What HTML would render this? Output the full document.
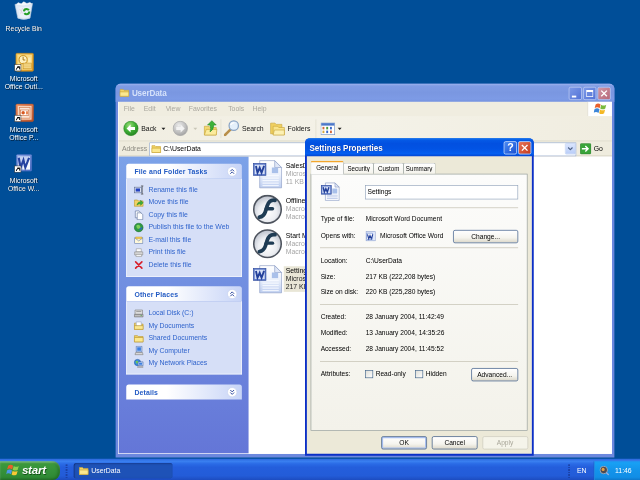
<!DOCTYPE html>
<html lang="en">
<head>
<meta charset="utf-8">
<title>UserData - Settings Properties</title>
<style>
html,body{margin:0;padding:0;}
body{width:640px;height:480px;overflow:hidden;background:#004e98;font-family:"Liberation Sans",sans-serif;}
#root{position:absolute;left:0;top:0;width:1024px;height:768px;transform:scale(0.625);transform-origin:0 0;background:#004e98;font-size:11px;color:#000;overflow:hidden;filter:blur(0.6px);}
.abs{position:absolute;}
#root div,#root span,#root svg,#root b{position:absolute;white-space:nowrap;}
/* desktop icons */
.dlabel{color:#fff;text-align:center;width:90px;line-height:13px;font-size:11px;text-shadow:1px 1px 1px rgba(0,0,0,.7);}
/* explorer */
#exp{z-index:0;left:185px;top:134px;width:798px;height:597.500px;background:#6c88de;border-radius:8px 8px 0 0;}
#exptitle{left:0;top:0;width:798px;height:29px;border-radius:8px 8px 0 0;background:linear-gradient(#9db3ee 0%,#7f9ce4 12%,#7a97e1 50%,#7d9be6 85%,#7491dd 100%);}
#exptitle .t{left:26px;top:8px;font-weight:bold;font-size:13px;color:#d6e2fa;letter-spacing:-0.2px;}
.cbtn{width:21px;height:21px;border-radius:3px;border:1px solid #c8d4f6;box-sizing:border-box;}
#expin{left:4px;top:29px;width:790px;height:563px;background:#fff;}
#menubar{left:0;top:0;width:790px;height:24px;background:#f0ede0;}
#menubar span{top:5px;color:#a9a79e;}
#toolbar{left:0;top:23px;width:790px;height:40px;background:linear-gradient(90deg,#f1eee2,#f4f2e8 50%,#f0ede0);}
#toolbar span{color:#111;top:13px;}
#addr{left:0;top:62px;width:790px;height:25px;background:#efecde;border-top:1px solid #d8d4c4;border-bottom:1px solid #c9c6b6;box-sizing:border-box;z-index:2;}
#leftpane{left:0;top:87px;width:209px;height:476px;background:linear-gradient(#7ca2e8,#6476d7);}
.bxh{width:185px;height:24px;border-radius:4px 4px 0 0;background:linear-gradient(90deg,#fff 0%,#fff 35%,#c7d4f7 100%);}
.bxh b{left:13px;top:7px;color:#235bc4;font-size:11px;letter-spacing:0.25px;}
.bxb{width:183px;background:#d6dff7;border:1px solid #fff;border-top:none;}
.lnk{color:#2f63cc;left:34.500px;font-size:11px;}
.bxb svg,.bxb span{margin-top:1px;}
.tile{color:#000;line-height:13.5px;}
.tile i{font-style:normal;color:#a6a6a6;position:static;}
/* dialog */
#dlg{left:488px;top:221px;width:366px;height:508px;border-radius:8px 8px 0 0;background:#0c2fc6;}
#dlgtitle{left:0;top:0;width:366px;height:29px;border-radius:8px 8px 0 0;background:linear-gradient(#1a86f6 0%,#055ae6 10%,#0250e0 30%,#0253e4 60%,#045ef0 85%,#0246d2 100%);}
#dlgtitle .t{left:7px;top:8px;font-weight:bold;font-size:13px;color:#fff;letter-spacing:-0.1px;text-shadow:1px 1px 0 #0a2a90;}
#dlgin{left:3px;top:29px;width:360px;height:476px;background:#ece9d8;font-size:10.600px;}
.tab{height:18px;top:10px;background:linear-gradient(#fff,#f4f3ec);border:1px solid #919b9c;border-bottom:none;border-radius:3px 3px 0 0;box-sizing:border-box;text-align:center;line-height:17px;font-size:11px;}
.tab span{display:inline-block;transform:scaleX(0.9);}
#tabpage{left:6px;top:28px;width:347px;height:411px;background:linear-gradient(#fcfcfb,#f3f2ea);border:1px solid #919b9c;box-sizing:border-box;}
.sep{height:1px;background:#bdbaaa;left:21px;width:317px;}
.lab{left:22px;}
.val{left:94px;}
.btn{height:21px;width:75px;box-sizing:border-box;border:1px solid #24467c;border-radius:3px;background:linear-gradient(#fff 0%,#f5f4ee 60%,#dcd8ca 100%);text-align:center;line-height:18px;}
.chk{width:13px;height:13px;box-sizing:border-box;border:1px solid #3a5f87;background:linear-gradient(135deg,#dcdcd6,#fff);}
/* taskbar */
#taskbar{left:0;top:734px;width:1024px;height:34px;background:linear-gradient(#2b66dc 0%,#3a80f0 12%,#2a6be6 24%,#245edc 40%,#235cd8 80%,#1d4cc0 100%);}
</style>
</head>
<body>
<div id="root">

<!-- DESKTOP ICONS -->
<div id="desk" style="left:0;top:0;width:1024px;height:734px;">
 <!-- Recycle Bin -->
 <svg style="left:22px;top:2px" width="32" height="32" viewBox="0 0 32 32">
  <path d="M2 5 L30 3.500 L26 27 Q16 31 6.500 27 Z" fill="#dfe9f6" stroke="#b9cade" stroke-width="1"/>
  <path d="M3 6 l4 -4 l5 2 l4 -3.500 l5 3 l5 -2 l3 3 q-13 5 -26 1.500z" fill="#f4f8fd" stroke="#c4d2e4" stroke-width=".6"/>
  <path d="M7 10 L25 9 L23 25 Q16 27.500 9.500 25Z" fill="#eef3fa" opacity=".8"/>
  <circle cx="20.500" cy="16.500" r="4.300" fill="none" stroke="#27a027" stroke-width="3.200" stroke-dasharray="10.500 3"/>
  <path d="M9 12 l6 8 M14 11 l-3 9" stroke="#d8b8c8" stroke-width="1" opacity=".7"/>
 </svg>
 <div class="dlabel" style="left:-7px;top:38.500px;">Recycle Bin</div>
 <!-- Outlook -->
 <svg style="left:22px;top:84px" width="36" height="34" viewBox="0 0 36 34">
  <defs><linearGradient id="ol" x1="0" y1="0" x2="1" y2="1"><stop offset="0" stop-color="#f6c858"/><stop offset="1" stop-color="#dc9420"/></linearGradient></defs>
  <rect x="3.500" y="1" width="28" height="29" rx="2" fill="url(#ol)" stroke="#c08418"/>
  <rect x="6" y="3.500" width="23" height="24" fill="#f8dc88"/>
  <circle cx="15" cy="11.500" r="6.500" fill="#fdf0c0" stroke="#c8901c" stroke-width="1.600"/>
  <path d="M15 7v5h3.500" stroke="#a87410" stroke-width="1.500" fill="none"/>
  <rect x="15" y="17" width="13" height="9" fill="#fbe6a0" stroke="#c8901c"/>
  <path d="M15 20h13M15 23h13" stroke="#d8a030" stroke-width="1"/>
  <rect x="23" y="8" width="4" height="8" fill="#fdf0c0" opacity=".8"/>
  <rect x="1.500" y="19.5" width="10" height="10" fill="#fff" stroke="#333" stroke-width=".8"/><path d="M4 27.5 q.5 -4.500 5 -4.500 M9.500 23.0 h-4 M9.500 23.0 v4" stroke="#000" stroke-width="1.600" fill="none"/>
 </svg>
 <div class="dlabel" style="left:-7px;top:119.500px;">Microsoft<br>Office Outl...</div>
 <!-- PowerPoint -->
 <svg style="left:22px;top:165px" width="36" height="34" viewBox="0 0 36 34">
  <defs><linearGradient id="pl" x1="0" y1="0" x2="1" y2="1"><stop offset="0" stop-color="#ee9468"/><stop offset="1" stop-color="#b85028"/></linearGradient></defs>
  <rect x="3.500" y="1.500" width="28" height="28" rx="2" fill="url(#pl)" stroke="#b05028"/>
  <rect x="6.500" y="4.500" width="22" height="22" fill="#f8d4bc"/>
  <rect x="9" y="7" width="17" height="17" fill="#fbe6d8" stroke="#d07848"/>
  <rect x="11" y="11" width="13" height="9" fill="#fff" stroke="#c86838"/>
  <circle cx="15" cy="15.500" r="2.800" fill="#d85820"/>
  <rect x="19.500" y="13" width="3.500" height="5" fill="#e88858"/>
  <rect x="1.500" y="19.5" width="10" height="10" fill="#fff" stroke="#333" stroke-width=".8"/><path d="M4 27.5 q.5 -4.500 5 -4.500 M9.500 23.0 h-4 M9.500 23.0 v4" stroke="#000" stroke-width="1.600" fill="none"/>
 </svg>
 <div class="dlabel" style="left:-7px;top:201px;">Microsoft<br>Office P...</div>
 <!-- Word -->
 <svg style="left:22px;top:246px" width="36" height="34" viewBox="0 0 36 34">
  <defs><linearGradient id="wl" x1="0" y1="0" x2="1" y2="1"><stop offset="0" stop-color="#98aee8"/><stop offset="1" stop-color="#4868c0"/></linearGradient></defs>
  <rect x="4.500" y="1.500" width="24" height="26" rx="1" fill="url(#wl)" stroke="#5878c8"/>
  <rect x="7" y="4" width="19" height="21" fill="#c4d2f2"/>
  <path d="M17 14 L26 9 V25 H14z" fill="#f4f7fd"/>
  <path d="M8 6.500 l3 15.500 l4.500 -12 l3 12 l6 -15.500" stroke="#2442a0" stroke-width="3.400" fill="none" stroke-linejoin="miter"/>
  <rect x="1.500" y="19.5" width="10" height="10" fill="#fff" stroke="#333" stroke-width=".8"/><path d="M4 27.5 q.5 -4.500 5 -4.500 M9.500 23.0 h-4 M9.500 23.0 v4" stroke="#000" stroke-width="1.600" fill="none"/>
 </svg>
 <div class="dlabel" style="left:-7px;top:282px;">Microsoft<br>Office W...</div>
</div>

<!-- EXPLORER WINDOW -->
<div id="exp">
 <div id="exptitle">
  <span class="t">UserData</span>
  <svg style="left:6px;top:6px" width="16" height="16" viewBox="0 0 16 16"><path d="M1 3h5l1.500 1.500H15V14H1z" fill="#f1d264" stroke="#c9a53a"/><path d="M1 14V7h14v7z" fill="#fbe88f" stroke="#c9a53a"/></svg>
  <div class="cbtn" style="left:725px;top:5px;background:linear-gradient(135deg,#7d9ae8,#5272d6)"><div style="left:4px;top:13px;width:7px;height:3px;background:#fff"></div></div>
  <div class="cbtn" style="left:748px;top:5px;background:linear-gradient(135deg,#7d9ae8,#5272d6)"><div style="left:4px;top:4px;width:11px;height:11px;box-sizing:border-box;border:1.500px solid #fff;border-top-width:3px"></div></div>
  <div class="cbtn" style="left:771px;top:5px;background:linear-gradient(135deg,#d098a8,#b86878)"><svg style="left:3px;top:3px" width="13" height="13" viewBox="0 0 13 13"><path d="M2 2l9 9M11 2l-9 9" stroke="#fff" stroke-width="2.200"/></svg></div>
 </div>
 <div id="expin">
  <div id="menubar">
   <span style="left:9px">File</span><span style="left:41px">Edit</span><span style="left:76px">View</span><span style="left:113px">Favorites</span><span style="left:176px">Tools</span><span style="left:215px">Help</span>
   <div style="left:751px;top:0;width:39px;height:23px;background:#fff;border-left:1px solid #d8d4c4;box-sizing:border-box"></div>
   <svg style="left:761px;top:1px" width="22" height="20" viewBox="0 0 22 20">
    <path d="M3 3 q4 -3 8 0 l-1.6 6 q-4 -3 -8 0z" fill="#e8602c"/>
    <path d="M12 3.4 q4 3 8 0 l-1.6 6 q-4 3 -8 0z" fill="#79b93c"/>
    <path d="M1.2 10.6 q4 -3 8 0 l-1.6 6 q-4 -3 -8 0z" fill="#3c86d8"/>
    <path d="M10.2 11 q4 3 8 0 l-1.6 6 q-4 3 -8 0z" fill="#f4b824"/>
   </svg>
  </div>
  <div id="toolbar">
   <!-- back -->
   <svg style="left:8px;top:7px" width="25" height="25" viewBox="0 0 25 25">
    <defs><radialGradient id="gb" cx=".4" cy=".3" r=".8"><stop offset="0" stop-color="#9be07a"/><stop offset=".5" stop-color="#3fae35"/><stop offset="1" stop-color="#1f7d20"/></radialGradient>
    <radialGradient id="gg" cx=".4" cy=".3" r=".8"><stop offset="0" stop-color="#ececec"/><stop offset=".6" stop-color="#bdbdbd"/><stop offset="1" stop-color="#9a9a9a"/></radialGradient></defs>
    <circle cx="12.5" cy="12.5" r="11.5" fill="url(#gb)" stroke="#2e8a2a" stroke-width="1"/>
    <path d="M5.5 12.5 l6.5 -6.5 v4 h7 v5 h-7 v4z" fill="#fff"/>
   </svg>
   <span style="left:37px">Back</span>
   <svg style="left:69px;top:18px" width="7" height="4"><path d="M0 0h7l-3.5 4z" fill="#222"/></svg>
   <!-- forward -->
   <svg style="left:87px;top:7px" width="25" height="25" viewBox="0 0 25 25">
    <circle cx="12.5" cy="12.5" r="11.5" fill="url(#gg)" stroke="#a5a5a5" stroke-width="1"/>
    <path d="M19.5 12.5 l-6.5 -6.5 v4 h-7 v5 h7 v4z" fill="#f3f3f3"/>
   </svg>
   <svg style="left:120px;top:18px" width="7" height="4"><path d="M0 0h7l-3.5 4z" fill="#c9c6b8"/></svg>
   <!-- up -->
   <svg style="left:136px;top:6px" width="24" height="26" viewBox="0 0 24 26">
    <path d="M2 10 h7 l2 2 h10 v12 h-19z" fill="#f3d970" stroke="#c9a53a"/>
    <path d="M2 24 l3 -9 h17 l-1 9z" fill="#fbeb9c" stroke="#c9a53a"/>
    <path d="M14 1 l7 7 h-4 q0 8 -6 11 q2 -5 0 -11 h-4z" fill="#3db23a" stroke="#1f7d20" stroke-width=".8"/>
   </svg>
   <div style="left:164px;top:5px;width:1px;height:30px;background:#dcd9ca"></div>
   <!-- search -->
   <svg style="left:169px;top:6px" width="26" height="26" viewBox="0 0 26 26">
    <path d="M2 24 l9 -9" stroke="#b88f4a" stroke-width="4" stroke-linecap="round"/>
    <circle cx="16" cy="9" r="7.5" fill="#e4f0fb" stroke="#8aa4c4" stroke-width="2"/>
    <path d="M11 8 q2 -4 6 -4" stroke="#fff" stroke-width="2" fill="none"/>
   </svg>
   <span style="left:198px">Search</span>
   <!-- folders -->
   <svg style="left:243px;top:7px" width="24" height="24" viewBox="0 0 24 24">
    <path d="M1 4 h7 l2 2 h9 v15 h-18z" fill="#f0d060" stroke="#c9a53a"/>
    <path d="M5 9 h7 l2 2 h9 v12 h-18z" fill="#f9e48a" stroke="#c9a53a"/>
    <path d="M5 23 l2 -8 h16 l0 8z" fill="#fdf1b4" stroke="#c9a53a"/>
   </svg>
   <span style="left:271px">Folders</span>
   <div style="left:316px;top:5px;width:1px;height:30px;background:#dcd9ca"></div>
   <!-- views -->
   <svg style="left:324px;top:10px" width="23" height="20" viewBox="0 0 23 20">
    <rect x=".5" y=".5" width="22" height="19" fill="#fff" stroke="#6e8fc4"/>
    <rect x="1" y="1" width="21" height="4" fill="#4d78c8"/>
    <rect x="3" y="7" width="3" height="4" fill="#d46a3a"/><rect x="9" y="7" width="3" height="4" fill="#4d9a3a"/><rect x="15" y="7" width="3" height="4" fill="#3a68c8"/>
    <rect x="3" y="13" width="3" height="4" fill="#d4a83a"/><rect x="9" y="13" width="3" height="4" fill="#3a68c8"/><rect x="15" y="13" width="3" height="4" fill="#d46a3a"/>
   </svg>
   <svg style="left:351px;top:18px" width="7" height="4"><path d="M0 0h7l-3.5 4z" fill="#222"/></svg>
  </div>
  <div id="addr">
   <span style="left:6px;top:6px;color:#8d8b82">Address</span>
   <div style="left:50px;top:2px;width:683px;height:21.500px;background:#fff;border:1px solid #8ea4c7;box-sizing:border-box"></div>
   <svg style="left:53px;top:4px" width="16" height="16" viewBox="0 0 16 16">
    <path d="M1 3 h5 l1.5 1.5 h7.5 v9.5 h-14z" fill="#f1d264" stroke="#c9a53a"/>
    <path d="M1 14 v-7 h14 v7z" fill="#fbe88f" stroke="#c9a53a"/>
   </svg>
   <span style="left:72px;top:6px;color:#000">C:\UserData</span>
   <div style="left:715px;top:3px;width:17px;height:18px;background:linear-gradient(#dbe6fd,#b9cdf8);border-radius:2px;border:1px solid #b4c8f0;box-sizing:border-box"></div>
   <svg style="left:719px;top:9px" width="9" height="6" viewBox="0 0 9 6"><path d="M1 1l3.5 3.5L8 1" stroke="#4d6185" stroke-width="1.8" fill="none"/></svg>
   <svg style="left:739px;top:3px" width="18" height="18" viewBox="0 0 18 18">
    <rect x=".5" y=".5" width="17" height="17" rx="2" fill="#3aa43a" stroke="#257a27"/>
    <path d="M3 9 h9 M8.5 4.5 l4.500 4.500 l-4.500 4.500" stroke="#fff" stroke-width="2.200" fill="none"/>
   </svg>
   <span style="left:761px;top:6px;color:#000">Go</span>
  </div>
  <div id="leftpane">
   <div class="bxh" style="left:13px;top:12px"><b>File and Folder Tasks</b><svg style="left:161px;top:4px" width="17" height="17" viewBox="0 0 17 17"><circle cx="8.5" cy="8.500" r="7.500" fill="#fff" stroke="#c3cfee"/><path d="M5.5 8 l3 -3 l3 3 M5.5 12 l3 -3 l3 3" stroke="#24409a" stroke-width="1.500" fill="none"/></svg></div>
   <div class="bxb" style="left:13px;top:36px;height:156px"><svg style="left:10.500px;top:9px" width="16" height="16" viewBox="0 0 16 16"><rect x="1" y="3.500" width="11" height="9" fill="#e4e9f4" stroke="#5a6a92"/><rect x="3" y="5.500" width="7" height="5" fill="#2442c0"/><path d="M13.500 1.500v13M11.500 1.500h4M11.500 14.500h4" stroke="#333" stroke-width="1"/></svg><span class="lnk" style="top:10px">Rename this file</span><svg style="left:10.500px;top:29px" width="16" height="16" viewBox="0 0 16 16"><path d="M1 4h5l1.500 1.500H15V14H1z" fill="#f1d264" stroke="#b99532"/><path d="M5 12 q1 -5 6 -5 v-2.500 l4 4 l-4 4 v-2.500 q-3 0 -6 2z" fill="#3db23a" stroke="#1f7d20" stroke-width=".7"/></svg><span class="lnk" style="top:30px">Move this file</span><svg style="left:10.500px;top:49px" width="16" height="16" viewBox="0 0 16 16"><path d="M2.500 1.500h6l3 3v8h-9z" fill="#fff" stroke="#5a6f9a"/><path d="M5.500 4.500h6l3 3v8h-9z" fill="#fff" stroke="#5a6f9a"/></svg><span class="lnk" style="top:50px">Copy this file</span><svg style="left:10.500px;top:69px" width="16" height="16" viewBox="0 0 16 16"><circle cx="8" cy="8" r="7" fill="#2f9a44" stroke="#1d6f30"/><path d="M4 5q3-3 6 0q2 3-1 5q-4 1-5-5z" fill="#7fd05a"/><path d="M9 11q3 0 4-3" stroke="#2a62c8" stroke-width="2" fill="none"/></svg><span class="lnk" style="top:70px">Publish this file to the Web</span><svg style="left:10.500px;top:89px" width="16" height="16" viewBox="0 0 16 16"><rect x="1.500" y="4.500" width="13" height="9" fill="#fff8d8" stroke="#6b84b4"/><path d="M1.500 4.500l6.500 5 6.500-5" stroke="#6b84b4" fill="none"/><path d="M3 3h10v3H3z" fill="#f3c850" stroke="#b99532" stroke-width=".6"/></svg><span class="lnk" style="top:90px">E-mail this file</span><svg style="left:10.500px;top:109px" width="16" height="16" viewBox="0 0 16 16"><path d="M4 2h8v5H4z" fill="#fff" stroke="#999"/><path d="M1.500 7h13v5h-13z" fill="#d9d9d9" stroke="#8a8a8a"/><path d="M3.500 11h9v3.500h-9z" fill="#f3f3f3" stroke="#999"/></svg><span class="lnk" style="top:110px">Print this file</span><svg style="left:10.500px;top:129px" width="16" height="16" viewBox="0 0 16 16"><path d="M3 3l10 10M13 3L3 13" stroke="#d8202c" stroke-width="2.600" stroke-linecap="round"/></svg><span class="lnk" style="top:130px">Delete this file</span></div>
   <div class="bxh" style="left:13px;top:208px"><b>Other Places</b><svg style="left:161px;top:4px" width="17" height="17" viewBox="0 0 17 17"><circle cx="8.5" cy="8.500" r="7.500" fill="#fff" stroke="#c3cfee"/><path d="M5.5 8 l3 -3 l3 3 M5.5 12 l3 -3 l3 3" stroke="#24409a" stroke-width="1.500" fill="none"/></svg></div>
   <div class="bxb" style="left:13px;top:232px;height:116px"><svg style="left:10.500px;top:10px" width="16" height="16" viewBox="0 0 16 16"><path d="M2 3h12v7H2z" fill="#dcdcdc" stroke="#808080"/><path d="M1 10h14v4H1z" fill="#bfbfbf" stroke="#707070"/><rect x="4" y="4.500" width="8" height="1.500" fill="#999"/><rect x="11" y="11.500" width="2" height="1" fill="#3a3"/></svg><span class="lnk" style="top:11px">Local Disk (C:)</span><svg style="left:10.500px;top:30px" width="16" height="16" viewBox="0 0 16 16"><path d="M1 4h5l1.500 1.500H15V14H1z" fill="#f1d264" stroke="#b99532"/><path d="M4 2h8v7H4z" fill="#fff" stroke="#9aa7c4"/><path d="M1 14V8h14v6z" fill="#fbe88f" stroke="#b99532"/></svg><span class="lnk" style="top:31px">My Documents</span><svg style="left:10.500px;top:50px" width="16" height="16" viewBox="0 0 16 16"><path d="M1 4h5l1.500 1.500H15V14H1z" fill="#f1d264" stroke="#b99532"/><path d="M1 14V7h14v7z" fill="#fbe88f" stroke="#b99532"/></svg><span class="lnk" style="top:51px">Shared Documents</span><svg style="left:10.500px;top:70px" width="16" height="16" viewBox="0 0 16 16"><path d="M4 1h9v9H4z" fill="#cfe1fa" stroke="#4a6aa8"/><path d="M5.500 2.500h6v5.500h-6z" fill="#3d7fe0"/><path d="M3 11h11l1 3.500H2z" fill="#d8d8d8" stroke="#808080"/></svg><span class="lnk" style="top:71px">My Computer</span><svg style="left:10.500px;top:90px" width="16" height="16" viewBox="0 0 16 16"><circle cx="6" cy="7" r="5" fill="#3a8ee0" stroke="#1f5aa8"/><path d="M3 5q2-2 4 0q1 2-1 4q-3 0-3-4z" fill="#6fca5a"/><path d="M7 6h8v6H7z" fill="#cfe1fa" stroke="#4a6aa8"/><path d="M8.500 7.500h5v3h-5z" fill="#3d7fe0"/><path d="M6 13.500h9v1.500H6z" fill="#bbb" stroke="#777" stroke-width=".5"/></svg><span class="lnk" style="top:91px">My Network Places</span></div>
   <div class="bxh" style="left:13px;top:365px"><b>Details</b><svg style="left:161px;top:4px" width="17" height="17" viewBox="0 0 17 17"><circle cx="8.5" cy="8.500" r="7.500" fill="#fff" stroke="#c3cfee"/><path d="M5.5 5 l3 3 l3 -3 M5.5 9 l3 3 l3 -3" stroke="#24409a" stroke-width="1.500" fill="none"/></svg></div>
  </div>
  <div style="left:0;top:0;width:1px;height:563px;background:#fff;z-index:3"></div><div style="left:0;top:562px;width:790px;height:1px;background:#fff;z-index:3"></div>
  <div id="files" style="left:209px;top:87px;width:581px;height:476px;background:#fff;"><svg style="left:6px;top:6px" width="48" height="48" viewBox="0 0 48 48">
    <defs><linearGradient id="pg1" x1="0" y1="0" x2="0" y2="1"><stop offset="0" stop-color="#ffffff"/><stop offset=".5" stop-color="#edf2fc"/><stop offset="1" stop-color="#bccdf0"/></linearGradient></defs>
    <path d="M11.500 1h24l11 11v32.500h-35z" fill="url(#pg1)" stroke="#8a9cc4"/>
    <path d="M35.500 1v11h11z" fill="#dfe6f6" stroke="#8a9cc4"/>
    <path d="M16 25h26M16 29h26M16 33h26M16 37h26M16 41h26" stroke="#fafcff" stroke-width="1.500"/>
    <rect x="31" y="12" width="10" height="9" fill="#a9c0ea"/>
    <rect x="1.500" y="5.500" width="20" height="19" fill="#5877c8" stroke="#2b479a"/>
    <rect x="3.500" y="7.500" width="16" height="15" fill="#d5dff6"/>
    <path d="M5.500 9.500l2.500 11 3.500-8 3 8 4-11" stroke="#23409a" stroke-width="3" fill="none"/>
   </svg><div class="tile" style="left:56px;top:8px;width:130px;line-height:13.5px">&nbsp;SalesData<br><i>&nbsp;Microsoft Word Doc...</i><br><i>&nbsp;11 KB</i></div><svg style="left:6px;top:61px" width="48" height="48" viewBox="0 0 48 48">
    <defs><radialGradient id="fl1" cx=".5" cy=".6" r=".55"><stop offset="0" stop-color="#fff"/><stop offset=".6" stop-color="#eceef2"/><stop offset="1" stop-color="#c3c8d2"/></radialGradient></defs>
    <circle cx="24" cy="24" r="22" fill="url(#fl1)" stroke="#4e545e" stroke-width="2.500"/>
    <path d="M36 9.500 q-9 -1.500 -12.500 9 l-3 9.500 q-2.500 7.500 -9.500 8.500" stroke="#1f3c54" stroke-width="6" fill="none" stroke-linecap="round"/>
    <path d="M22 23 h10" stroke="#1f3c54" stroke-width="5.500" stroke-linecap="round"/>
   </svg><div class="tile" style="left:56px;top:64px;width:130px;line-height:13.5px">&nbsp;Offline Catalog<br><i>&nbsp;Macromedia Flash M...</i><br><i>&nbsp;Macromedia Flash M...</i></div><svg style="left:6px;top:116px" width="48" height="48" viewBox="0 0 48 48">
    <defs><radialGradient id="fl2" cx=".5" cy=".6" r=".55"><stop offset="0" stop-color="#fff"/><stop offset=".6" stop-color="#eceef2"/><stop offset="1" stop-color="#c3c8d2"/></radialGradient></defs>
    <circle cx="24" cy="24" r="22" fill="url(#fl2)" stroke="#4e545e" stroke-width="2.500"/>
    <path d="M36 9.500 q-9 -1.500 -12.500 9 l-3 9.500 q-2.500 7.500 -9.500 8.500" stroke="#1f3c54" stroke-width="6" fill="none" stroke-linecap="round"/>
    <path d="M22 23 h10" stroke="#1f3c54" stroke-width="5.500" stroke-linecap="round"/>
   </svg><div class="tile" style="left:56px;top:119.500px;width:130px;line-height:13.5px">&nbsp;Start Menu Demo<br><i>&nbsp;Macromedia Flash M...</i><br><i>&nbsp;Macromedia Flash M...</i></div><svg style="left:6px;top:174px" width="48" height="48" viewBox="0 0 48 48">
    <defs><linearGradient id="pg2" x1="0" y1="0" x2="0" y2="1"><stop offset="0" stop-color="#ffffff"/><stop offset=".5" stop-color="#edf2fc"/><stop offset="1" stop-color="#bccdf0"/></linearGradient></defs>
    <path d="M11.500 1h24l11 11v32.500h-35z" fill="url(#pg2)" stroke="#8a9cc4"/>
    <path d="M35.500 1v11h11z" fill="#dfe6f6" stroke="#8a9cc4"/>
    <path d="M16 25h26M16 29h26M16 33h26M16 37h26M16 41h26" stroke="#fafcff" stroke-width="1.500"/>
    <rect x="31" y="12" width="10" height="9" fill="#a9c0ea"/>
    <rect x="1.500" y="5.500" width="20" height="19" fill="#5877c8" stroke="#2b479a"/>
    <rect x="3.500" y="7.500" width="16" height="15" fill="#d5dff6"/>
    <path d="M5.500 9.500l2.500 11 3.500-8 3 8 4-11" stroke="#23409a" stroke-width="3" fill="none"/>
   </svg><div class="tile" style="left:56px;top:176px;width:130px;line-height:13.5px;background:#e9e6d6">&nbsp;Settings<br><i style="color:#222">&nbsp;Microsoft Word Doc...</i><br><i style="color:#222">&nbsp;217 KB</i></div></div>
 </div>
</div>

<!-- DIALOG -->
<div id="dlg">
 <div id="dlgtitle"><span class="t">Settings Properties</span>
  <div class="cbtn" style="left:318px;top:5px;border-color:#fff;background:linear-gradient(135deg,#4a8af4,#1a50d0)"><span style="left:4.500px;top:0px;color:#fff;font-weight:bold;font-size:17px;line-height:19px">?</span></div>
  <div class="cbtn" style="left:341px;top:5px;border-color:#fff;background:linear-gradient(135deg,#e8765a,#c43a1c)"><svg style="left:3px;top:3px" width="13" height="13" viewBox="0 0 13 13"><path d="M2 2l9 9M11 2l-9 9" stroke="#fff" stroke-width="2.200"/></svg></div></div>
 <div id="dlgin">
  <div id="tabpage"></div>
  <div class="tab" style="left:58px;width:49px"><span style="position:static">Security</span></div>
  <div class="tab" style="left:106px;width:49px"><span style="position:static">Custom</span></div>
  <div class="tab" style="left:154px;width:52px"><span style="position:static">Summary</span></div>
  <div class="tab" style="left:6px;top:7px;width:53px;height:22px;line-height:16px;background:#fcfcfb;border-top:3px solid #f3a62c;"><span style="position:static">General</span></div>
  <svg style="left:22px;top:41px" width="32" height="32" viewBox="0 0 48 48">
    <path d="M11.500 2.500h23l10 10v32h-33z" fill="#fdfdff" stroke="#8a9cc4" stroke-width="1.500"/>
    <path d="M34.500 2.500v10h10z" fill="#dfe6f6" stroke="#8a9cc4" stroke-width="1.500"/>
    <path d="M15 32h26M15 36h26M15 40h26" stroke="#b4c4e6" stroke-width="2"/>
    <rect x="28" y="16" width="12" height="12" fill="#a9c0ea"/>
    <rect x="1.500" y="8.500" width="24" height="21" fill="#5877c8" stroke="#2b479a" stroke-width="1.500"/>
    <rect x="4" y="11" width="19" height="16" fill="#d5dff6"/>
    <path d="M6 13l3 11.500 3.500-8 3.500 8 4-11.500" stroke="#23409a" stroke-width="3.500" fill="none"/>
   </svg>
  <div style="left:93px;top:46px;width:245px;height:23px;box-sizing:border-box;border:1px solid #8ea0b8;background:#fff"></div>
  <span style="left:97px;top:50px">Settings</span>
  <div class="sep" style="top:82px"></div>
  <span class="lab" style="top:94px">Type of file:</span><span class="val" style="top:94px">Microsoft Word Document</span>
  <span class="lab" style="top:120px">Opens with:</span><svg style="left:94px;top:120px" width="16" height="16" viewBox="0 0 16 16"><rect x=".5" y=".5" width="15" height="15" fill="#dfe7f8" stroke="#7088c4"/><rect x="2" y="3" width="9" height="10" fill="#fff" stroke="#4b6fc6" stroke-width=".8"/><path d="M3 5l2 7 2-5 2 5 2.500-7" stroke="#23409a" stroke-width="1.800" fill="none"/></svg><span style="left:117px;top:120px">Microsoft Office Word</span>
  <div class="btn" style="left:234px;top:118px;width:104px">Change...</div>
  <div class="sep" style="top:146px"></div>
  <span class="lab" style="top:160px">Location:</span><span class="val" style="top:160px">C:\UserData</span><span class="lab" style="top:186px">Size:</span><span class="val" style="top:186px">217 KB (222,208 bytes)</span><span class="lab" style="top:211px">Size on disk:</span><span class="val" style="top:211px">220 KB (225,280 bytes)</span>
  <div class="sep" style="top:237px"></div>
  <span class="lab" style="top:250px">Created:</span><span class="val" style="top:250px">28 January 2004, 11:42:49</span><span class="lab" style="top:276px">Modified:</span><span class="val" style="top:276px">13 January 2004, 14:35:26</span><span class="lab" style="top:301px">Accessed:</span><span class="val" style="top:301px">28 January 2004, 11:45:52</span>
  <div class="sep" style="top:328px"></div>
  <span class="lab" style="top:341px">Attributes:</span>
  <div class="chk" style="left:93px;top:342px"></div><span style="left:110px;top:341px">Read-only</span>
  <div class="chk" style="left:173px;top:342px"></div><span style="left:190px;top:341px">Hidden</span>
  <div class="btn" style="left:263px;top:339px">Advanced...</div>
  <div class="btn" style="left:119px;width:73px;top:448px;box-shadow:inset 0 0 0 2px #a9c0f0">OK</div>
  <div class="btn" style="left:200px;width:73px;top:448px">Cancel</div>
  <div class="btn" style="left:280.500px;width:73px;top:448px;border-color:#c9c7ba;background:#f5f4ea;color:#a9a79a">Apply</div>
 </div>
</div>

<!-- TASKBAR -->
<div id="taskbar">
 <div style="left:0;top:4px;width:96px;height:30px;border-radius:0 12px 12px 0;background:linear-gradient(#5cb85a 0%,#3c9a3c 12%,#35913a 50%,#2f8a35 85%,#27752c 100%);box-shadow:inset -3px 0 5px rgba(0,60,0,.4),inset 0 2px 3px rgba(255,255,255,.35)"></div>
 <svg style="left:10px;top:8px" width="22" height="20" viewBox="0 0 22 20">
    <path d="M3 3 q4 -3 8 0 l-1.600 6 q-4 -3 -8 0z" fill="#e8602c"/>
    <path d="M12 3.400 q4 3 8 0 l-1.600 6 q-4 3 -8 0z" fill="#8fd04c"/>
    <path d="M1.200 10.600 q4 -3 8 0 l-1.600 6 q-4 -3 -8 0z" fill="#4c96e8"/>
    <path d="M10.200 11 q4 3 8 0 l-1.600 6 q-4 3 -8 0z" fill="#f8c834"/>
 </svg>
 <span style="left:35px;top:8px;color:#fff;font-weight:bold;font-style:italic;font-size:18.500px;letter-spacing:-0.3px;text-shadow:1px 1px 1px rgba(0,40,0,.6)">start</span>
 <div style="left:105px;top:9px;width:3px;height:22px;background:repeating-linear-gradient(#1a42a8 0 2px,transparent 2px 4px)"></div>
 <div style="left:118px;top:7px;width:158px;height:24px;border-radius:3px;background:#1e52b7;box-shadow:inset 1px 1px 2px rgba(0,0,40,.5)"></div>
 <svg style="left:126px;top:11px" width="16" height="16" viewBox="0 0 16 16"><path d="M1 3h5l1.500 1.500H15V14H1z" fill="#f1d264" stroke="#c9a53a"/><path d="M1 14V7h14v7z" fill="#fbe88f" stroke="#c9a53a"/></svg>
 <span style="left:146px;top:13px;color:#fff">UserData</span>
 <div style="left:909px;top:9px;width:3px;height:22px;background:repeating-linear-gradient(#1a42a8 0 2px,transparent 2px 4px)"></div>
 <span style="left:923px;top:13px;color:#fff;">EN</span>
 <div style="left:950px;top:4px;width:74px;height:30px;background:linear-gradient(#1b9af0 0%,#18a0f4 10%,#1393ea 50%,#118ee6 85%,#0e78cc 100%);border-left:1px solid #0f5fc0;box-shadow:inset 1px 0 0 #3cb4fa"></div>
 <svg style="left:959px;top:11px" width="16" height="16" viewBox="0 0 16 16"><circle cx="7" cy="7" r="6" fill="#4a4a52" stroke="#c8c8d0"/><circle cx="6" cy="6" r="2.500" fill="#e8a040"/><path d="M11 11l4 4" stroke="#9ab0e0" stroke-width="2"/></svg>
 <span style="left:984px;top:13px;color:#fff">11:46</span>
</div>

</div>
</body>
</html>
